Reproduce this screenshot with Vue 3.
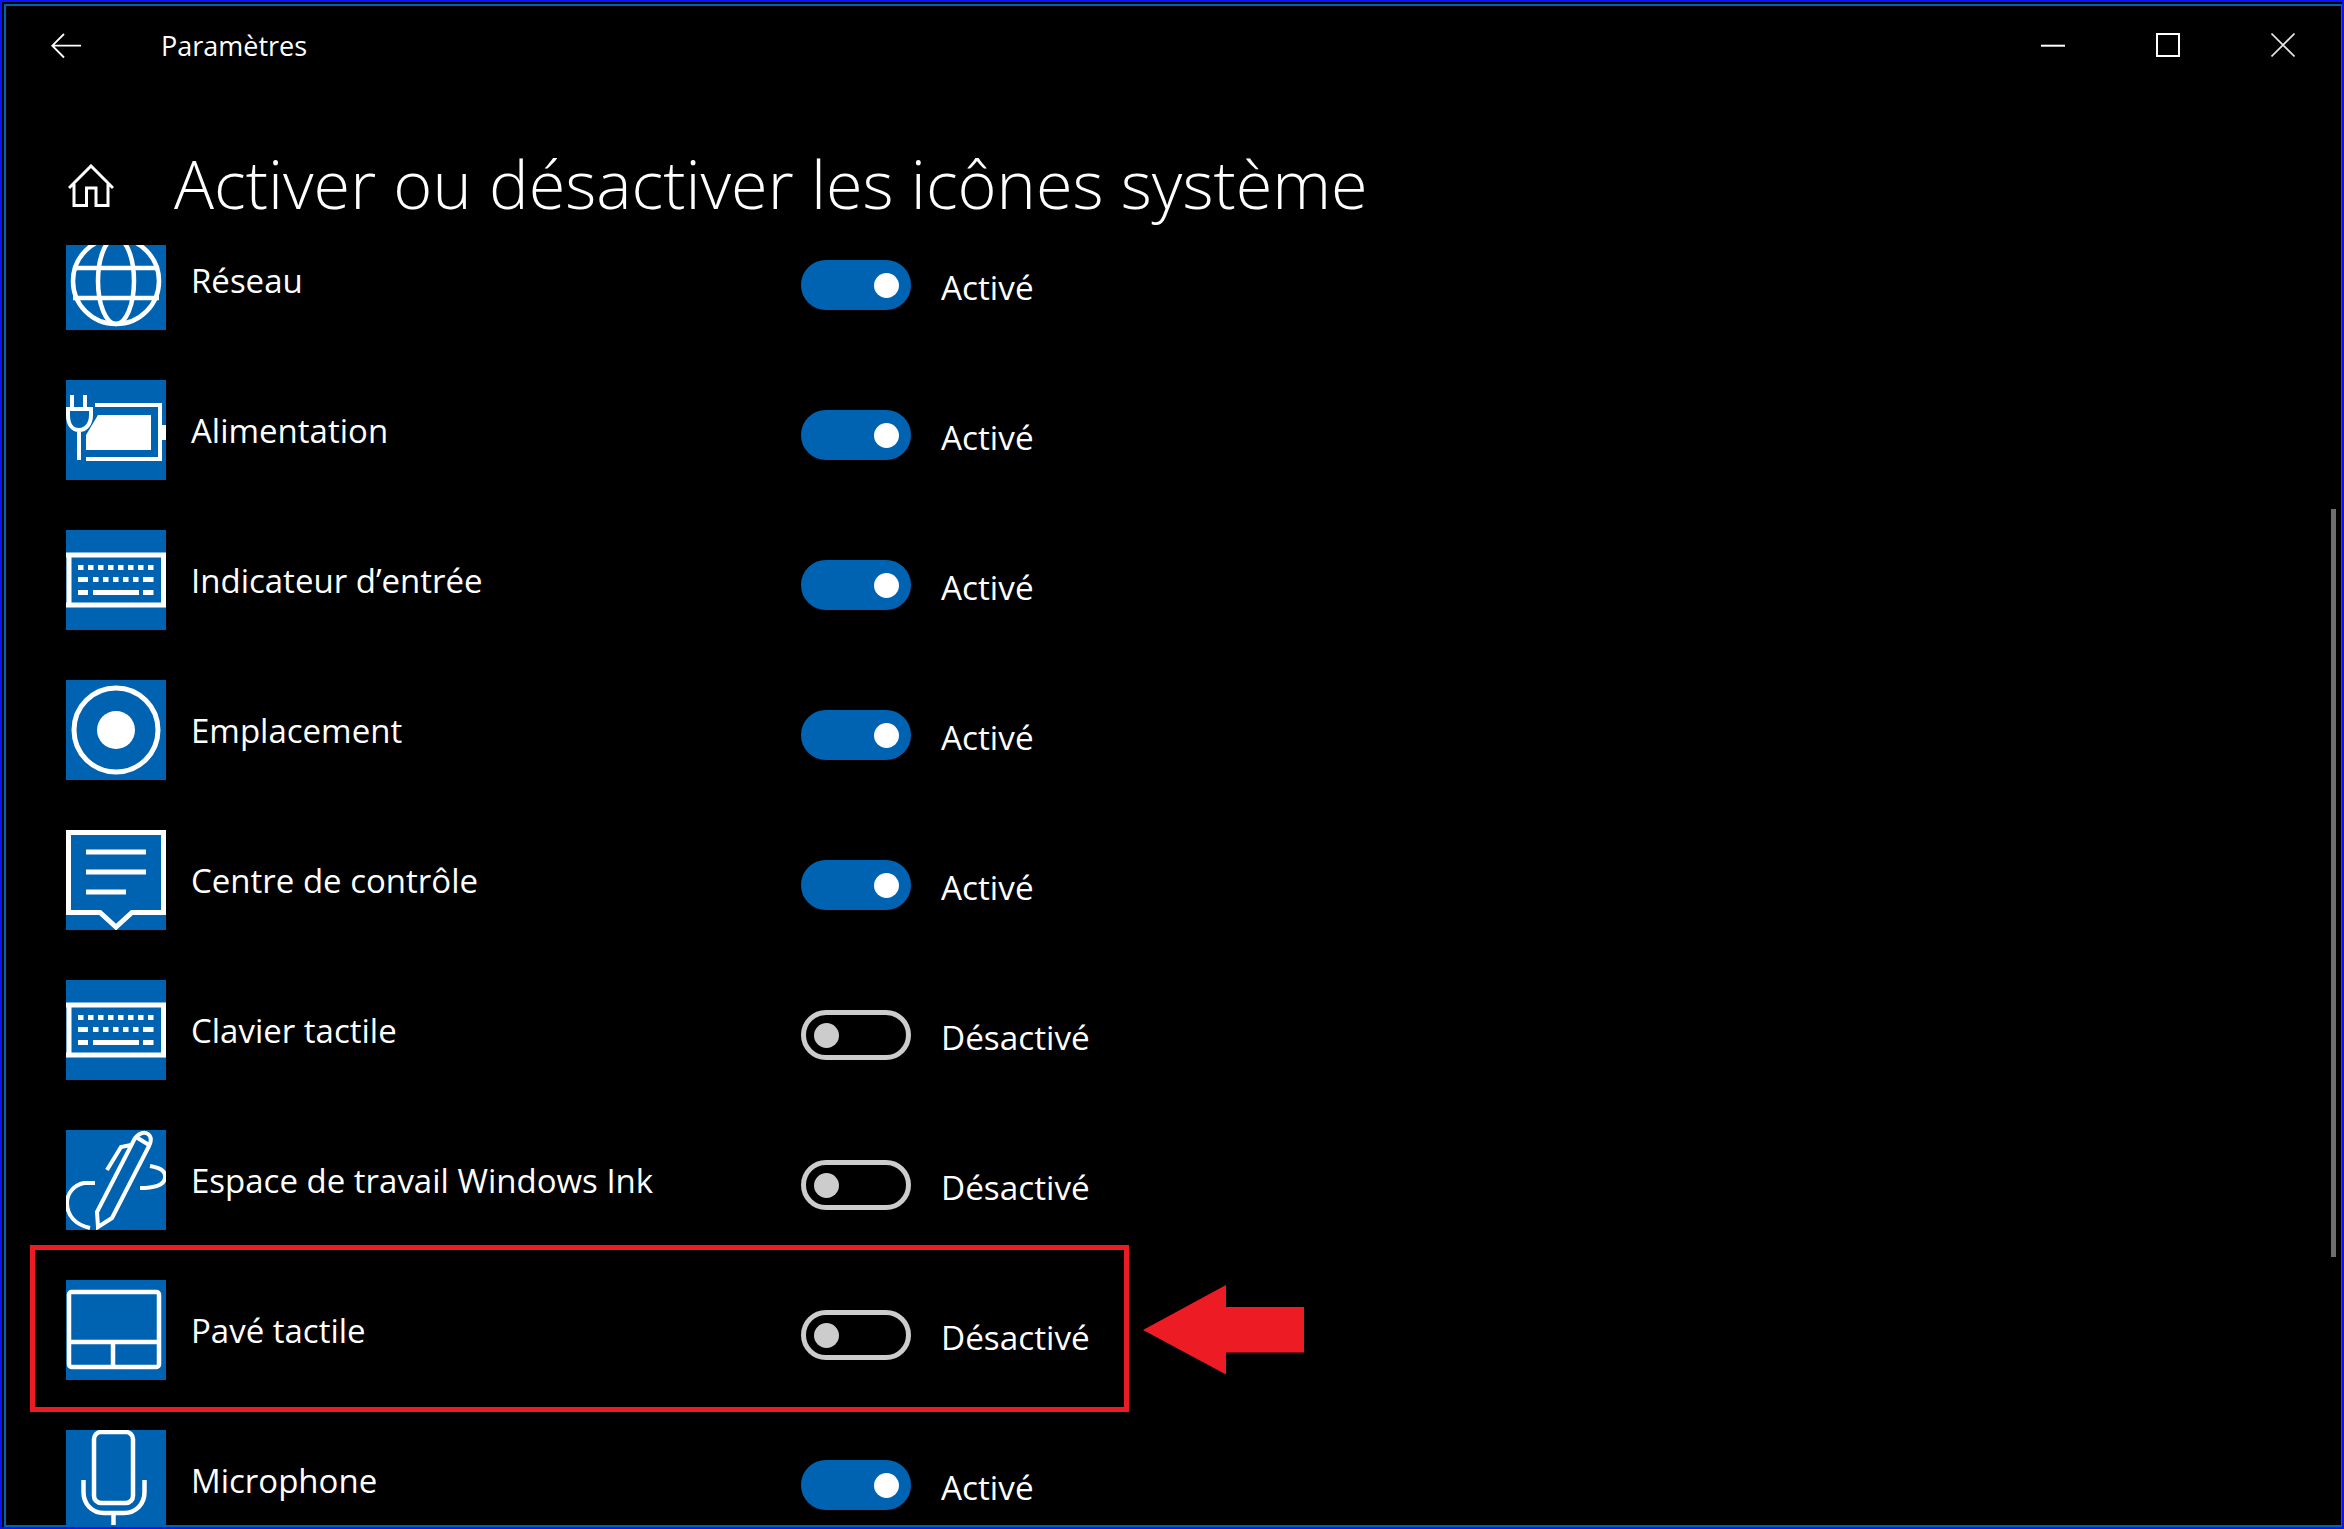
<script setup>
const rows = [
  { name: 'Réseau', icon: 'globe', on: true },
  { name: 'Alimentation', icon: 'power', on: true },
  { name: 'Indicateur d’entrée', icon: 'keyboard', on: true },
  { name: 'Emplacement', icon: 'location', on: true },
  { name: 'Centre de contrôle', icon: 'notify', on: true },
  { name: 'Clavier tactile', icon: 'keyboard', on: false },
  { name: 'Espace de travail Windows Ink', icon: 'ink', on: false },
  { name: 'Pavé tactile', icon: 'touchpad', on: false },
  { name: 'Microphone', icon: 'mic', on: true },
]
const keyRow1 = [12, 22, 32, 42, 52, 62, 72, 82]
const keyRow2 = [27, 37, 47, 57, 67]
</script>

<template>
  <div class="frame">
    <div class="window">
      <header class="titlebar">
        <svg class="back" width="30" height="26" viewBox="0 0 30 26" fill="none" stroke="#fff" stroke-width="1.8">
          <path d="M30 12.7H1.5M13 1 1.3 12.7 13 24.5" />
        </svg>
        <span class="app-name">Paramètres</span>
        <div class="controls">
          <svg width="24" height="24" viewBox="0 0 24 24" fill="none" stroke="#fff" stroke-width="2"><path d="M0 12.7H24" /></svg>
          <svg width="24" height="24" viewBox="0 0 24 24" fill="none" stroke="#fff" stroke-width="2"><rect x="1" y="1" width="22" height="22" /></svg>
          <svg width="24" height="24" viewBox="0 0 24 24" fill="none" stroke="#e6e6e6" stroke-width="1.6"><path d="M.5.5 23.5 23.5M23.5.5.5 23.5" /></svg>
        </div>
      </header>

      <div class="page-head">
        <svg class="home" width="46" height="44" viewBox="0 0 46 44" fill="none" stroke="#fff" stroke-width="3">
          <path d="M1 24 23 2 45 24M6 20V41.500H18.500V24H28V41.500H40V20" />
        </svg>
        <h1>Activer ou désactiver les icônes système</h1>
      </div>

      <div class="viewport">
        <div class="list">
          <div v-for="row in rows" :key="row.name" class="row">
            <svg class="icon" width="100" height="100" viewBox="0 0 100 100" fill="none" stroke="#fff" stroke-width="4.500">
              <rect class="tile" width="100" height="100" />
              <g v-if="row.icon === 'globe'">
                <circle cx="50" cy="51" r="43" />
                <ellipse cx="50" cy="51" rx="18" ry="43" />
                <path d="M7 38H93M7 68H93" />
              </g>
              <g v-else-if="row.icon === 'power'" stroke-width="4">
                <path d="M29 25H94V79H20" />
                <path d="M32 35H85V70H20V55Z" fill="#fff" stroke="none" />
                <path d="M94 45H100V60H94Z" fill="#fff" stroke="none" />
                <path d="M6 15V29M19 15V29M2 29H25V35C25 44 20 50 13 50C6 50 2 44 2 35ZM13 50V80" />
              </g>
              <g v-else-if="row.icon === 'keyboard'">
                <path d="M0 25H97.500V75H0" stroke-width="5" />
                <path d="M3 25V75" stroke-width="5" />
                <g fill="#fff" stroke="none">
                  <rect v-for="x in keyRow1" :key="x" :x="x" y="35" width="5.500" height="5" />
                  <rect x="12" y="47" width="10" height="5" />
                  <rect v-for="x in keyRow2" :key="x" :x="x" y="47" width="5.500" height="5" />
                  <rect x="77" y="47" width="10.500" height="5" />
                  <rect x="12" y="60" width="10" height="5" />
                  <rect x="27" y="60" width="46" height="5" />
                  <rect x="77" y="60" width="10.500" height="5" />
                </g>
              </g>
              <g v-else-if="row.icon === 'location'">
                <circle cx="50" cy="50" r="42" stroke-width="5" />
                <circle cx="50" cy="50" r="19" fill="#fff" stroke="none" />
              </g>
              <g v-else-if="row.icon === 'notify'">
                <path d="M2.500 2.500H97.500V82.500H66L50 97 34 82.500H2.500Z" stroke-width="5" />
                <path d="M20 22H80M20 42H80M20 62H60" stroke-width="5" />
              </g>
              <g v-else-if="row.icon === 'ink'" stroke-width="4">
                <path d="M31 82 68 10C71 4 78 1 82 4C86 7 85 12 83 16L46 88 32 97Z" />
                <path d="M70 7 83 15" />
                <path d="M41 40 55 17 65 15" />
                <path d="M84 36C96 38 100 42 99 48C98 55 90 58 74 58" />
                <path d="M29 53H18C8 55 1 63 1 73C1 86 10 95 24 98" />
              </g>
              <g v-else-if="row.icon === 'touchpad'">
                <rect x="3" y="12" width="90" height="75" rx="2.500" />
                <path d="M3 62H93M47 62V87" />
              </g>
              <g v-else-if="row.icon === 'mic'">
                <rect x="28" y="2" width="39" height="71" rx="7" />
                <path d="M17.500 50V62C17.500 74 26 83 38 83H58C70 83 78.500 74 78.500 62V50" />
                <path d="M47.500 83V100" />
              </g>
            </svg>
            <span class="name">{{ row.name }}</span>
            <span class="toggle" :class="{ on: row.on }"><i class="thumb"></i></span>
            <span class="state">{{ row.on ? 'Activé' : 'Désactivé' }}</span>
          </div>
        </div>
      </div>

      <i class="scrollbar"></i>
    </div>

    <i class="highlight"></i>
    <svg class="arrow" width="164" height="90" viewBox="0 0 164 90">
      <path d="M1 45 84 0V22H162V67.500H84V89.500Z" fill="#ed1c24" />
    </svg>
  </div>
</template>

<style scoped>
.frame {
  position: relative;
  box-sizing: border-box;
  width: 2344px;
  height: 1529px;
  padding: 2px 0 0 2px;
  border: 2px solid #0a14f5;
  background: #000;
  font-family: "Open Sans", "Noto Sans", sans-serif;
  color: #fff;
  overflow: hidden;
}
.window {
  position: relative;
  box-sizing: border-box;
  height: 100%;
  display: flex;
  flex-direction: column;
  border: 2px solid #0063b1;
  border-right-width: 1px;
  background: #000;
}
.titlebar {
  display: flex;
  align-items: center;
  height: 78px;
  padding-left: 45px;
  flex: none;
}
.back { flex: none; margin-top: 1px; }
.app-name {
  margin-left: 80px;
  font-size: 27px;
  line-height: 1;
}
.controls {
  margin-left: auto;
  margin-right: 46px;
  display: flex;
  gap: 91px;
}
.page-head {
  display: flex;
  align-items: center;
  height: 161px;
  padding: 40px 0 0 62px;
  flex: none;
  box-sizing: border-box;
}
.home { flex: none; margin-top: 3px; }
h1 {
  margin: 0 0 0 60px;
  font-size: 66.600px;
  font-weight: 300;
  line-height: 1;
  white-space: nowrap;
}
.viewport {
  flex: 1;
  min-height: 0;
  overflow: hidden;
}
.list {
  margin-top: -15px;
  padding-left: 60px;
}
.row {
  display: grid;
  grid-template-columns: 100px 635px 110px auto;
  align-items: center;
  height: 100px;
  margin-bottom: 50px;
}
.icon { display: block; }
.tile { fill: #0063b1; stroke: none; }
.name {
  padding-left: 25px;
  font-size: 33px;
  line-height: 1;
  white-space: nowrap;
}
.toggle {
  box-sizing: border-box;
  position: relative;
  display: block;
  width: 110px;
  height: 50px;
  margin-top: 10px;
  border: 5px solid #cccccc;
  border-radius: 25px;
}
.toggle.on {
  background: #0063b1;
  border-color: #0063b1;
}
.thumb {
  position: absolute;
  top: 7.500px;
  left: 7.500px;
  width: 25px;
  height: 25px;
  border-radius: 50%;
  background: #cccccc;
}
.toggle.on .thumb {
  left: auto;
  right: 7.500px;
  background: #fff;
}
.state {
  margin: 15px 0 0 30px;
  font-size: 33.300px;
  line-height: 1;
}
.scrollbar {
  position: absolute;
  top: 503px;
  left: 2325px;
  width: 5px;
  height: 748px;
  background: #6e6e6e;
}
.highlight {
  position: absolute;
  left: 28px;
  top: 1243px;
  box-sizing: border-box;
  width: 1099px;
  height: 167px;
  border: 5px solid #ed1c24;
}
.arrow {
  position: absolute;
  left: 1140px;
  top: 1283px;
}
</style>
